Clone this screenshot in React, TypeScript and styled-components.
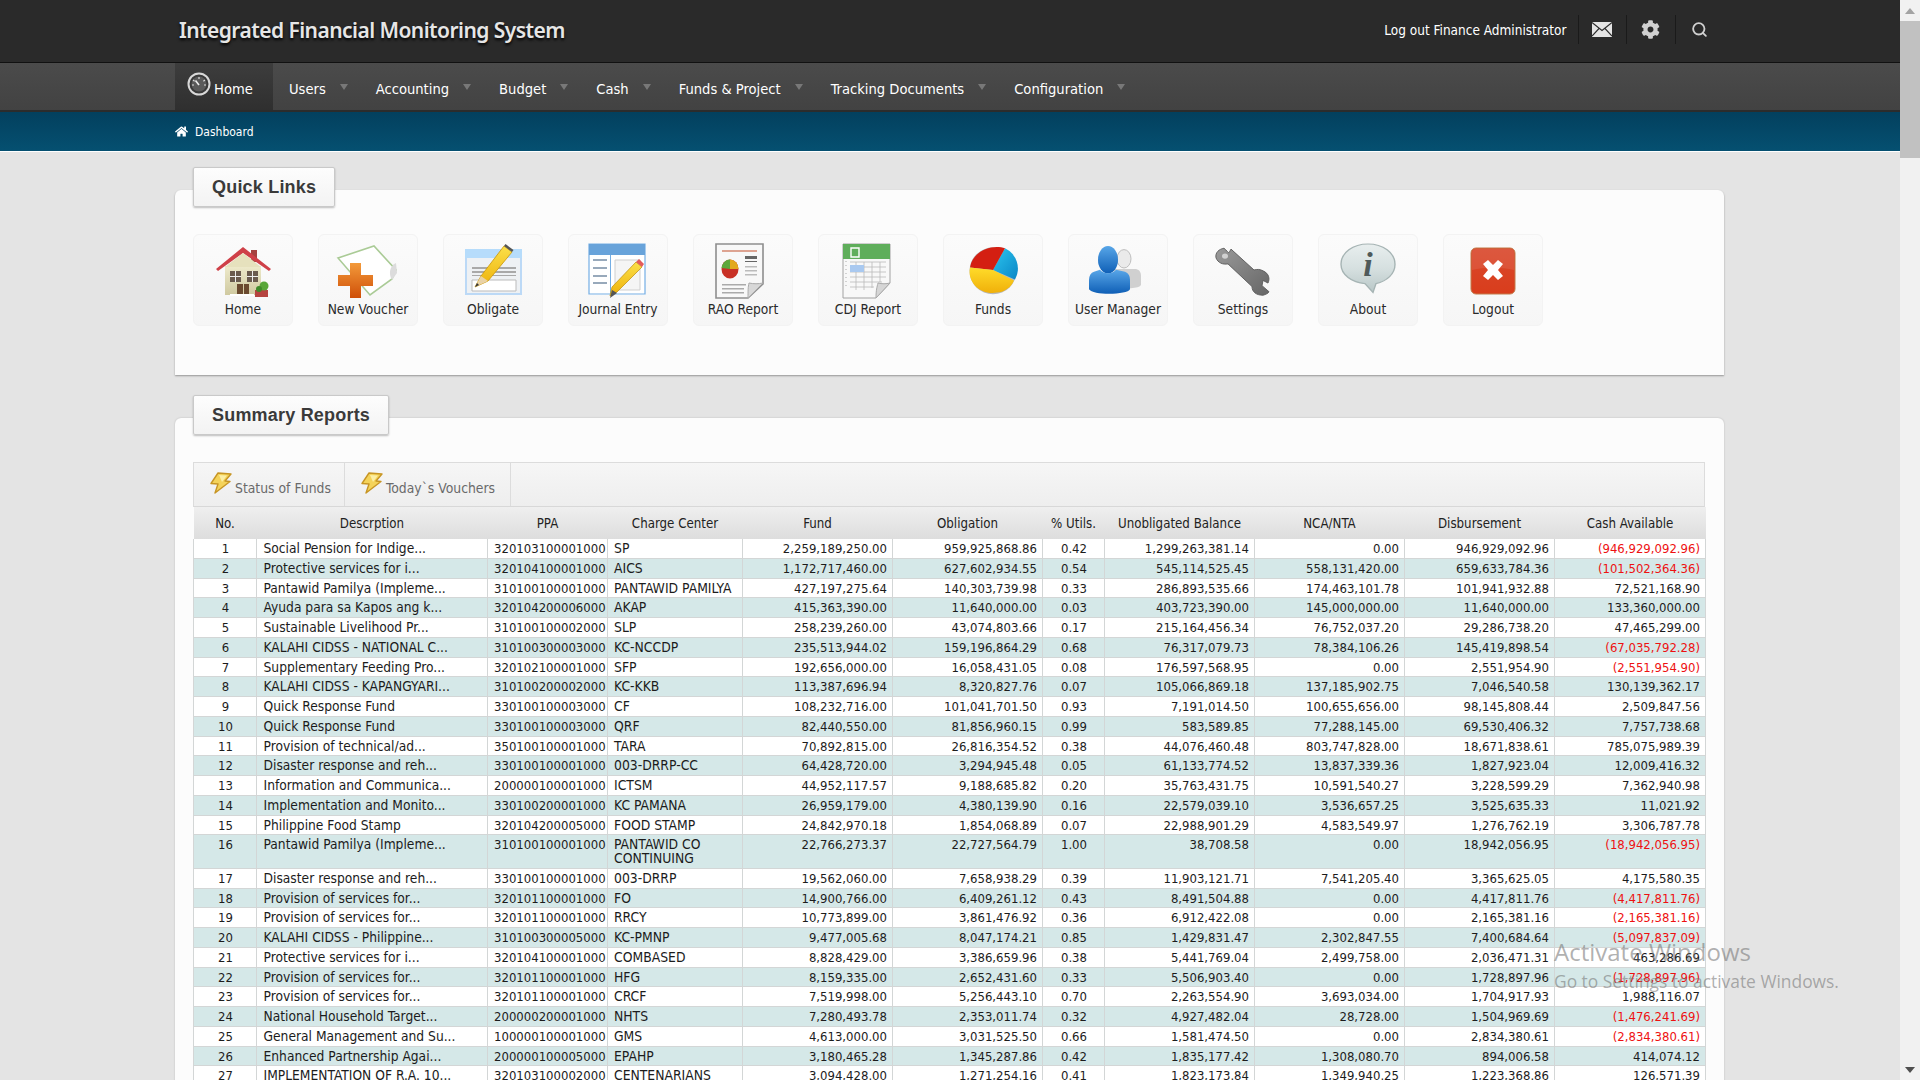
import React from "react";
import styled, { createGlobalStyle } from "styled-components";
import { FaCog, FaHome } from "react-icons/fa";
import { Search } from "lucide-react";

const UI = `"DejaVu Sans Condensed", "DejaVu Sans", sans-serif`;

const GlobalStyle = createGlobalStyle`
  html, body { margin: 0; padding: 0; height: 100%; overflow: hidden; background: #e4e4e4; }
  body { font-family: ${UI}; font-size: 13px; color: #222; }
  * { box-sizing: border-box; }
`;

const Viewport = styled.div`
  display: flex;
  height: 100vh;
  overflow: hidden;
  position: relative;
`;
const Main = styled.div`
  flex: 1;
  min-width: 0;
  overflow: hidden;
`;
const ScrollTrack = styled.div`
  width: 20px;
  flex: none;
  height: 100%;
  background: #f1f1f1;
  display: flex;
  flex-direction: column;
  align-items: center;
  justify-content: space-between;
`;
const ScrollArrow = styled.div<{ $down?: boolean }>`
  height: 21px;
  width: 100%;
  display: flex;
  align-items: center;
  justify-content: center;
  &::before {
    content: "";
    border-left: 5px solid transparent;
    border-right: 5px solid transparent;
    ${(p) => (p.$down ? "border-top: 6px solid #505050;" : "border-bottom: 6px solid #a3a3a3;")}
  }
`;
const ScrollThumb = styled.div`
  width: 100%;
  height: 137px;
  background: #c1c1c1;
`;
const ScrollSpace = styled.div`
  flex: 1;
`;

const TopBar = styled.header`
  height: 63px;
  background: #2a2a2a;
  border-bottom: 1px solid #111;
  display: flex;
  align-items: center;
  padding: 0 177px 3px 179px;
`;
const Brand = styled.div`
  font-family: "Noto Sans", sans-serif;
  font-weight: 600;
  font-size: 21px;
  letter-spacing: -0.55px;
  color: #e6e6e6;
  text-shadow: 0 2px 3px #000;
  flex: 1;
`;
const LogoutLink = styled.a`
  color: #fff;
  font-size: 13.5px;
  margin-right: 11px;
`;
const ActionIcon = styled.div`
  width: 48.5px;
  height: 29px;
  border-left: 1px solid #1a1a1a;
  display: flex;
  align-items: center;
  justify-content: center;
  color: #d0d0d0;
`;

const NavBar = styled.nav`
  height: 49px;
  background: linear-gradient(#4b4b4b, #424242);
  border-bottom: 2px solid #2c2c2c;
  display: flex;
  padding-left: 175px;
`;
const NavHome = styled.a`
  width: 98px;
  margin-right: 16px;
  display: flex;
  align-items: center;
  padding: 3px 0 0 12px;
  gap: 3px;
  color: #fff;
  font-size: 14.6px;
  background: linear-gradient(#3d3d3d, #2f2f2f);
  svg { margin-top: -8px; }
`;
const NavItem = styled.a`
  display: flex;
  align-items: center;
  padding-top: 3px;
  color: #fff;
  font-size: 14.6px;
  margin-right: 28px;
`;
const Caret = styled.span`
  margin-left: 14px;
  margin-top: -3px;
  border-left: 4.5px solid transparent;
  border-right: 4.5px solid transparent;
  border-top: 6px solid #787878;
`;

const Crumbs = styled.div`
  height: 40px;
  background: linear-gradient(#03405e, #055071);
  border-bottom: 1px solid #fff;
  display: flex;
  align-items: center;
  padding-left: 175px;
  gap: 7px;
  color: #fff;
  font-size: 12px;
`;

const Content = styled.main`
  padding: 38px 0 0 175px;
  width: 1724px;
`;
const Card = styled.section<{ $grow?: boolean }>`
  background: #fcfcfc;
  border-radius: 6px 6px 0 0;
  box-shadow: 0 1px 2px rgba(0, 0, 0, 0.35);
  padding: 0 18px 49px;
  margin-bottom: 43px;
  ${(p) => p.$grow && "padding-bottom: 0; margin-bottom: 0; box-shadow: 0 0 2px rgba(0,0,0,.2);"}
`;
const CardTitle = styled.h2`
  display: flex;
  width: fit-content;
  align-items: center;
  height: 40px;
  margin: 0;
  position: relative;
  top: -23px;
  margin-bottom: -23px;
  padding: 0 18px;
  background: linear-gradient(#fdfdfd, #f3f3f3);
  border: 1px solid #c9c9c9;
  border-radius: 2px;
  box-shadow: 0 1px 2px rgba(0, 0, 0, 0.25);
  font-family: "Liberation Sans", Arial, sans-serif;
  font-weight: 700;
  font-size: 18px;
  letter-spacing: 0.2px;
  color: #3a3a3a;
`;
const LinkGrid = styled.div`
  display: flex;
  gap: 25px;
  margin-top: 27px;
`;
const LinkTile = styled.a`
  width: 100px;
  height: 92px;
  background: linear-gradient(#fbfbfb, #f6f6f6);
  border: 1px solid #f3f3f3;
  border-radius: 6px;
  display: flex;
  flex-direction: column;
  align-items: center;
  padding-top: 8px;
  color: #2a2a2a;
  font-size: 13.7px;
  svg { flex: none; }
  span { margin-top: 2px; white-space: nowrap; }
`;

const TableBox = styled.div`
  margin-top: 27px;
  width: 1512px;
`;
const Tabs = styled.div`
  display: flex;
  height: 45px;
  background: linear-gradient(#f6f6f6, #eeeeee);
  border: 1px solid #dcdcdc;
  border-bottom: 1px solid #d8d8d8;
`;
const Tab = styled.a<{ $w: number }>`
  width: ${(p) => p.$w}px;
  border-right: 1px solid #dcdcdc;
  display: flex;
  align-items: flex-start;
  padding: 8px 0 0 15px;
  gap: 2px;
  color: #6a6a6a;
  font-size: 13.8px;
  span { margin-top: 9px; }
`;
const Table = styled.table`
  border-collapse: collapse;
  table-layout: fixed;
  width: 1512px;
  font-size: 13px;
  line-height: 13.75px;
  color: #1c1c1c;
`;
const HeadRow = styled.tr`
  height: 32px;
  background: linear-gradient(#efefef, #dddddd);
`;
const Th = styled.th`
  font-weight: 400;
  text-align: center;
  padding: 1px 0 0;
  font-size: 13.2px;
  color: #222;
`;
const Row = styled.tr<{ $even: boolean }>`
  background: ${(p) => (p.$even ? "#d5e8e8" : "#ffffff")};
`;
const Td = styled.td<{ $align?: string; $red?: boolean }>`
  border: 1px solid #d3d6d6;
  border-top: 0;
  padding: 3px 5px 2px 6px;
  vertical-align: top;
  text-align: ${(p) => p.$align || "left"};
  color: ${(p) => (p.$red ? "#ee1111" : "inherit")};
  white-space: normal;
  overflow: hidden;
`;
const DescCell = styled(Td)`
  font-size: 13.7px;
  padding-left: 6.5px;
`;
const CenterCell = styled(Td)`
  font-size: 13.8px;
`;

const Watermark = styled.div`
  position: absolute;
  left: 1554px;
  top: 936px;
  font-family: "Open Sans", sans-serif;
  color: rgba(110, 110, 110, 0.55);
  pointer-events: none;
`;
const WatermarkTitle = styled.div`
  font-size: 24px;
  line-height: 32px;
`;
const WatermarkNote = styled.div`
  font-size: 17.4px;
  line-height: 24px;
  margin-top: 1px;
  white-space: nowrap;
`;

const Gauge = () => (
  <svg width="24" height="24" viewBox="0 0 24 24">
    <circle cx="12" cy="12" r="10.5" fill="#3a3a3a" stroke="#d8d8d8" strokeWidth="2" />
    <circle cx="12" cy="12" r="7.5" fill="#5a5a5a" />
    <path d="M12 5v2M6 8l1.6 1.2M18 8l-1.6 1.2M5 13h2M19 13h-2" stroke="#ddd" strokeWidth="1.2" />
    <path d="M12 13L8.5 8.5" stroke="#eee" strokeWidth="1.6" />
  </svg>
);
const Mail = () => (
  <svg width="20" height="15" viewBox="0 0 20 15">
    <path d="M0 0h20v15H0z" fill="#e4e4e4" />
    <path d="M0 .5l10 8 10-8M0 14l7-7.5M20 14l-7-7.5" fill="none" stroke="#2a2a2a" strokeWidth="1.1" />
  </svg>
);
const Bolt = () => (
  <svg width="24" height="24" viewBox="0 0 24 24" style={{ flex: "none" }}>
    <path d="M9 2l13 1-6 7 5 .5L6 22l3-9-7-.5z" fill="#f4d35a" stroke="#c79524" strokeWidth="1.4" strokeLinejoin="round" />
    <path d="M10 4l8 .6-5 6.4" fill="#fbeea5" />
  </svg>
);

const IconBox: React.FC<{ children: React.ReactNode }> = ({ children }) => (
  <svg width="64" height="56" viewBox="0 0 64 56">{children}</svg>
);

const icons: Record<string, React.ReactNode> = {
  Home: (
    <IconBox>
      <defs>
        <linearGradient id="hw" x1="0" y1="0" x2="0" y2="1"><stop offset="0" stopColor="#eeeacb" /><stop offset="1" stopColor="#cfc9a0" /></linearGradient>
      </defs>
      <path d="M40 7h6v12h-6z" fill="#a5413f" />
      <path d="M14 23h36v29H14z" fill="url(#hw)" />
      <path d="M5 26L32 4l28 22-2 2L32 10 7 28z" fill="#cf4048" />
      <path d="M32 10L14 24h36z" fill="#e6e1bd" />
      <path d="M19 28h11v11H19zM36 28h11v11H36z" fill="#6a5b4e" />
      <path d="M24 28h1v11h-1zM19 33h11v1H19zM41 28h1v11h-1zM36 33h11v1H36z" fill="#eee" />
      <path d="M26 41h12v10H26z" fill="#6b4a2f" />
      <path d="M32 41h1v10h-1z" fill="#d7cfa7" />
      <path d="M19 51h24v2H19z" fill="#fff" />
      <path d="M44 47h13v7H44z" fill="#b5433f" />
      <circle cx="53" cy="43" r="4.5" fill="#58a638" />
      <circle cx="48" cy="46" r="3" fill="#3f8a2a" />
    </IconBox>
  ),
  "New Voucher": (
    <IconBox>
      <defs>
        <linearGradient id="nv" x1="0" y1="0" x2="0" y2="1"><stop offset="0" stopColor="#f39a3a" /><stop offset="1" stopColor="#cf4f08" /></linearGradient>
      </defs>
      <path d="M2 15L38 3l22 24-4 9-22 16z" fill="#fff" stroke="#aacb96" strokeWidth="1.6" />
      <path d="M60 20c-6 3-8 10-4 17l5-7z" fill="#dcdcdc" />
      <path d="M14 20h11v12h12v11H25v12H14V43H2V32h12z" fill="url(#nv)" />
    </IconBox>
  ),
  Obligate: (
    <IconBox>
      <defs>
        <linearGradient id="ob" x1="0" y1="0" x2="0" y2="1"><stop offset="0" stopColor="#fbe04a" /><stop offset="1" stopColor="#eeb10a" /></linearGradient>
      </defs>
      <path d="M4 6h57v46H4z" fill="#bcd9f6" />
      <path d="M6 15h53v35H6z" fill="#eef1f4" />
      <path d="M4 6h57v9H4z" fill="#b6dcfb" />
      <path d="M11 24h44v2H11zM11 28h44v2H11zM11 32h44v1H11z" fill="#a9a9a9" />
      <path d="M11 37h44v11H11z" fill="#fff" stroke="#bbb" />
      <path d="M14 44l6-11L43 3l8 6L27 38z" fill="url(#ob)" stroke="#c99508" strokeWidth=".8" />
      <path d="M14 44l6-11 7 5z" fill="#e9d2a6" />
      <path d="M14 44l2-4 2 2z" fill="#333" />
      <path d="M43 3l8 6 1.5-2-8-6z" fill="#555" />
    </IconBox>
  ),
  "Journal Entry": (
    <IconBox>
      <defs>
        <linearGradient id="je" x1="0" y1="0" x2="0" y2="1"><stop offset="0" stopColor="#fbe04a" /><stop offset="1" stopColor="#eeb10a" /></linearGradient>
      </defs>
      <g transform="translate(-3 1)">
        <path d="M6 0h56v51H6z" fill="#fff" />
        <path d="M6 0h56v50H6z" fill="#fff" stroke="#74aee4" strokeWidth="1.2" />
        <path d="M6 0h56v11H6z" fill="#68a3da" />
        <path d="M10 15h14v2H10zM10 23h14v2H10zM10 31h14v2H10zM10 38h14v2H10z" fill="#98a9bb" />
        <path d="M27 11h1v39h-1z" fill="#74aee4" />
        <path d="M32 16h25v30H32z" fill="#f5f5f5" stroke="#cfcfcf" />
        <path d="M27 52l2-9L53 18l6 5-25 25z" fill="url(#je)" stroke="#bb8c08" strokeWidth=".7" />
        <path d="M53 18l6 5 2-3-5-5z" fill="#e35c5c" />
        <path d="M27 54l2-8 5 3z" fill="#555" />
      </g>
    </IconBox>
  ),
  "RAO Report": (
    <IconBox>
      <g transform="translate(-6 0)">
        <path d="M11 1h47v40L43 55H11z" fill="#f8f8f8" stroke="#8e8e8e" strokeWidth="1.6" />
        <path d="M43 55c0-7 0-11 1-15 5 1 9 1 14 0z" fill="#d8d8d8" stroke="#aaa" />
        <path d="M17 7h35v2H17z" fill="#dda391" />
        <path d="M40 13h12v3H40zM40 18h12v1H40z" fill="#666" />
        <path d="M40 23h12v1.4H40zM40 27h12v1.4H40zM40 31h12v1.4H40z" fill="#bbb" />
        <path d="M17 41h24v1.4H17zM17 45h22v1.4H17zM17 49h22v1.4H17z" fill="#aaa" />
        <ellipse cx="25" cy="26" rx="8.5" ry="9.5" fill="#c83025" />
        <path d="M25 26V16.500a8.500 9.500 0 0 1 8.500 9.500z" fill="#e2a91c" />
        <path d="M25 26l-8.500-1a8.500 9.500 0 0 1 8.500-8.500z" fill="#5da83b" />
      </g>
    </IconBox>
  ),
  "CDJ Report": (
    <IconBox>
      <g transform="translate(-2 0)">
        <path d="M9 1h47v39L42 55H9z" fill="#f8f8f8" stroke="#a2a2a2" />
        <path d="M9 1h47v15H9z" fill="#5fae5b" />
        <path d="M17 5h8v9h-8z" fill="none" stroke="#fff" strokeWidth="1.4" />
        <path d="M16 19h36M16 24h36M16 29h36M16 34h36M16 39h32M16 44h24M22 19v28M30 19v28M38 19v26M46 19v20" stroke="#b9b9b9" strokeWidth=".8" fill="none" />
        <path d="M16 22h14v7H16z" fill="#a9c9f0" />
        <path d="M12 18v28" stroke="#aaa" strokeDasharray="1 3" />
        <path d="M42 55c0-8 1-11 2-15 4 1 8 1 12 0z" fill="#d6d6d6" stroke="#aaa" />
      </g>
    </IconBox>
  ),
  Funds: (
    <IconBox>
      <defs>
        <linearGradient id="f1" x1="0" y1="0" x2="0" y2="1"><stop offset="0" stopColor="#ffdc2a" /><stop offset="1" stopColor="#f0b00a" /></linearGradient>
        <linearGradient id="f2" x1="0" y1="0" x2="1" y2="1"><stop offset="0" stopColor="#2cc6ef" /><stop offset="1" stopColor="#0a86c6" /></linearGradient>
      </defs>
      <g transform="translate(0 3.500) scale(1 .87)">
        <ellipse cx="32" cy="28" rx="23.500" ry="27" fill="#b8b8b8" />
        <path d="M32 27L44 2a23 26 0 0 1 10 36z" fill="url(#f2)" />
        <path d="M32 27L44 2C32-3 12 4 9 24z" fill="#d41f12" />
        <path d="M32 27L9 24c-3 18 11 32 27 29 8-1 14-6 17-14z" fill="url(#f1)" />
      </g>
    </IconBox>
  ),
  "User Manager": (
    <IconBox>
      <defs>
        <linearGradient id="u1" x1="0" y1="0" x2="0" y2="1"><stop offset="0" stopColor="#58a6e8" /><stop offset="1" stopColor="#0f5fb6" /></linearGradient>
      </defs>
      <g transform="translate(-8 2) scale(1 .92)">
        <ellipse cx="46" cy="15" rx="7" ry="10" fill="#eaeaea" stroke="#bbb" />
        <path d="M36 26h22c4 1 5 4 5 8v9c0 3-8 5-27 5z" fill="#d0d0d0" />
        <ellipse cx="30" cy="16" rx="10" ry="15" fill="url(#u1)" />
        <path d="M22 27c3 5 13 5 16 0l9 2c4 2 5 5 5 9v10c-2 6-37 7-41 0V38c0-5 2-8 5-9z" fill="url(#u1)" />
      </g>
    </IconBox>
  ),
  Settings: (
    <IconBox>
      <defs>
        <linearGradient id="w1" x1="0" y1="0" x2="1" y2="1"><stop offset="0" stopColor="#9a9a9a" /><stop offset="1" stopColor="#666" /></linearGradient>
      </defs>
      <g transform="translate(0 3.500) scale(1 .87)">
        <path d="M13 2c-5 1-9 5-8 11 2 6 7 8 12 7l24 26c0 6 4 10 11 10 3-1 5-2 6-4l-7-7 1-6 5 3c2-5 1-11-5-14-3-2-6-2-9-1L20 3c-3 6-1 5-7-1z" fill="url(#w1)" stroke="#5c5c5c" />
        <circle cx="14" cy="11" r="3" fill="#fbfbfb" opacity=".6" />
      </g>
    </IconBox>
  ),
  About: (
    <IconBox>
      <defs>
        <linearGradient id="a1" x1="0" y1="0" x2="0" y2="1"><stop offset="0" stopColor="#e8eeee" /><stop offset=".5" stopColor="#d6e0e0" /><stop offset="1" stopColor="#b9c7c7" /></linearGradient>
      </defs>
      <g transform="translate(0 1) scale(1 .88)">
        <path d="M32 0c15 0 27 10 27 23 0 11-8 19-19 22l-3 10-8-10C16 44 5 35 5 23 5 10 17 0 32 0z" fill="url(#a1)" stroke="#a6b4b4" strokeWidth="1.4" />
      </g>
      <text x="32" y="33" textAnchor="middle" fontFamily="'Liberation Serif', serif" fontStyle="italic" fontWeight="700" fontSize="34" fill="#4f5a5a">i</text>
    </IconBox>
  ),
  Logout: (
    <IconBox>
      <defs>
        <linearGradient id="l1" x1="0" y1="0" x2="0" y2="1"><stop offset="0" stopColor="#d9482c" /><stop offset="1" stopColor="#d93d1c" /></linearGradient>
      </defs>
      <rect x="10" y="5" width="44" height="46" rx="5" fill="url(#l1)" stroke="#c27a4a" />
      <path d="M11 27c12-3 30-3 42 0V10a4 4 0 0 0-4-4H15a4 4 0 0 0-4 4z" fill="#fff" opacity=".09" />
      <path d="M22 21l5-4 5 5 5-5 5 4-5 6 5 6-5 4-5-5-5 5-5-4 5-6z" fill="#fff" />
    </IconBox>
  ),
};

const quickLinks = ["Home", "New Voucher", "Obligate", "Journal Entry", "RAO Report", "CDJ Report", "Funds", "User Manager", "Settings", "About", "Logout"];
const navItems = ["Users", "Accounting", "Budget", "Cash", "Funds & Project", "Tracking Documents", "Configuration"];

const columns: [string, number][] = [
  ["No.", 63], ["Descrption", 231], ["PPA", 120], ["Charge Center", 135], ["Fund", 150], ["Obligation", 150],
  ["% Utils.", 62], ["Unobligated Balance", 150], ["NCA/NTA", 150], ["Disbursement", 150], ["Cash Available", 151],
];

const rows: string[][] = [
  ["Social Pension for Indige...", "320103100001000", "SP", "2,259,189,250.00", "959,925,868.86", "0.42", "1,299,263,381.14", "0.00", "946,929,092.96", "(946,929,092.96)"],
  ["Protective services for i...", "320104100001000", "AICS", "1,172,717,460.00", "627,602,934.55", "0.54", "545,114,525.45", "558,131,420.00", "659,633,784.36", "(101,502,364.36)"],
  ["Pantawid Pamilya (Impleme...", "310100100001000", "PANTAWID PAMILYA", "427,197,275.64", "140,303,739.98", "0.33", "286,893,535.66", "174,463,101.78", "101,941,932.88", "72,521,168.90"],
  ["Ayuda para sa Kapos ang k...", "320104200006000", "AKAP", "415,363,390.00", "11,640,000.00", "0.03", "403,723,390.00", "145,000,000.00", "11,640,000.00", "133,360,000.00"],
  ["Sustainable Livelihood Pr...", "310100100002000", "SLP", "258,239,260.00", "43,074,803.66", "0.17", "215,164,456.34", "76,752,037.20", "29,286,738.20", "47,465,299.00"],
  ["KALAHI CIDSS - NATIONAL C...", "310100300003000", "KC-NCCDP", "235,513,944.02", "159,196,864.29", "0.68", "76,317,079.73", "78,384,106.26", "145,419,898.54", "(67,035,792.28)"],
  ["Supplementary Feeding Pro...", "320102100001000", "SFP", "192,656,000.00", "16,058,431.05", "0.08", "176,597,568.95", "0.00", "2,551,954.90", "(2,551,954.90)"],
  ["KALAHI CIDSS - KAPANGYARI...", "310100200002000", "KC-KKB", "113,387,696.94", "8,320,827.76", "0.07", "105,066,869.18", "137,185,902.75", "7,046,540.58", "130,139,362.17"],
  ["Quick Response Fund", "330100100003000", "CF", "108,232,716.00", "101,041,701.50", "0.93", "7,191,014.50", "100,655,656.00", "98,145,808.44", "2,509,847.56"],
  ["Quick Response Fund", "330100100003000", "QRF", "82,440,550.00", "81,856,960.15", "0.99", "583,589.85", "77,288,145.00", "69,530,406.32", "7,757,738.68"],
  ["Provision of technical/ad...", "350100100001000", "TARA", "70,892,815.00", "26,816,354.52", "0.38", "44,076,460.48", "803,747,828.00", "18,671,838.61", "785,075,989.39"],
  ["Disaster response and reh...", "330100100001000", "003-DRRP-CC", "64,428,720.00", "3,294,945.48", "0.05", "61,133,774.52", "13,837,339.36", "1,827,923.04", "12,009,416.32"],
  ["Information and Communica...", "200000100001000", "ICTSM", "44,952,117.57", "9,188,685.82", "0.20", "35,763,431.75", "10,591,540.27", "3,228,599.29", "7,362,940.98"],
  ["Implementation and Monito...", "330100200001000", "KC PAMANA", "26,959,179.00", "4,380,139.90", "0.16", "22,579,039.10", "3,536,657.25", "3,525,635.33", "11,021.92"],
  ["Philippine Food Stamp", "320104200005000", "FOOD STAMP", "24,842,970.18", "1,854,068.89", "0.07", "22,988,901.29", "4,583,549.97", "1,276,762.19", "3,306,787.78"],
  ["Pantawid Pamilya (Impleme...", "310100100001000", "PANTAWID CO CONTINUING", "22,766,273.37", "22,727,564.79", "1.00", "38,708.58", "0.00", "18,942,056.95", "(18,942,056.95)"],
  ["Disaster response and reh...", "330100100001000", "003-DRRP", "19,562,060.00", "7,658,938.29", "0.39", "11,903,121.71", "7,541,205.40", "3,365,625.05", "4,175,580.35"],
  ["Provision of services for...", "320101100001000", "FO", "14,900,766.00", "6,409,261.12", "0.43", "8,491,504.88", "0.00", "4,417,811.76", "(4,417,811.76)"],
  ["Provision of services for...", "320101100001000", "RRCY", "10,773,899.00", "3,861,476.92", "0.36", "6,912,422.08", "0.00", "2,165,381.16", "(2,165,381.16)"],
  ["KALAHI CIDSS - Philippine...", "310100300005000", "KC-PMNP", "9,477,005.68", "8,047,174.21", "0.85", "1,429,831.47", "2,302,847.55", "7,400,684.64", "(5,097,837.09)"],
  ["Protective services for i...", "320104100001000", "COMBASED", "8,828,429.00", "3,386,659.96", "0.38", "5,441,769.04", "2,499,758.00", "2,036,471.31", "463,286.69"],
  ["Provision of services for...", "320101100001000", "HFG", "8,159,335.00", "2,652,431.60", "0.33", "5,506,903.40", "0.00", "1,728,897.96", "(1,728,897.96)"],
  ["Provision of services for...", "320101100001000", "CRCF", "7,519,998.00", "5,256,443.10", "0.70", "2,263,554.90", "3,693,034.00", "1,704,917.93", "1,988,116.07"],
  ["National Household Target...", "200000200001000", "NHTS", "7,280,493.78", "2,353,011.74", "0.32", "4,927,482.04", "28,728.00", "1,504,969.69", "(1,476,241.69)"],
  ["General Management and Su...", "100000100001000", "GMS", "4,613,000.00", "3,031,525.50", "0.66", "1,581,474.50", "0.00", "2,834,380.61", "(2,834,380.61)"],
  ["Enhanced Partnership Agai...", "200000100005000", "EPAHP", "3,180,465.28", "1,345,287.86", "0.42", "1,835,177.42", "1,308,080.70", "894,006.58", "414,074.12"],
  ["IMPLEMENTATION OF R.A. 10...", "320103100002000", "CENTENARIANS", "3,094,428.00", "1,271,254.16", "0.41", "1,823,173.84", "1,349,940.25", "1,223,368.86", "126,571.39"],
];

export default function App() {
  return (
    <Viewport>
      <GlobalStyle />
      <Main>
        <TopBar>
          <Brand>Integrated Financial Monitoring System</Brand>
          <LogoutLink>Log out Finance Administrator</LogoutLink>
          <ActionIcon><Mail /></ActionIcon>
          <ActionIcon><FaCog size={19} /></ActionIcon>
          <ActionIcon><Search size={17} strokeWidth={2.6} /></ActionIcon>
        </TopBar>
        <NavBar>
          <NavHome><Gauge />Home</NavHome>
          {navItems.map((n) => (
            <NavItem key={n}>{n}<Caret /></NavItem>
          ))}
        </NavBar>
        <Crumbs><FaHome size={13} />Dashboard</Crumbs>
        <Content>
          <Card>
            <CardTitle>Quick Links</CardTitle>
            <LinkGrid>
              {quickLinks.map((q) => (
                <LinkTile key={q}>{icons[q]}<span>{q}</span></LinkTile>
              ))}
            </LinkGrid>
          </Card>
          <Card $grow>
            <CardTitle>Summary Reports</CardTitle>
            <TableBox>
              <Tabs>
                <Tab $w={151}><Bolt /><span>Status of Funds</span></Tab>
                <Tab $w={166}><Bolt /><span>Today`s Vouchers</span></Tab>
              </Tabs>
              <Table>
                <colgroup>
                  {columns.map(([c, w]) => <col key={c} width={w} />)}
                </colgroup>
                <thead>
                  <HeadRow>
                    {columns.map(([c]) => <Th key={c}>{c}</Th>)}
                  </HeadRow>
                </thead>
                <tbody>
                  {rows.map((r, i) => (
                    <Row key={i} $even={i % 2 === 1}>
                      <Td $align="center">{i + 1}</Td>
                      <DescCell>{r[0]}</DescCell>
                      <Td>{r[1]}</Td>
                      <CenterCell>{r[2]}</CenterCell>
                      <Td $align="right">{r[3]}</Td>
                      <Td $align="right">{r[4]}</Td>
                      <Td $align="center">{r[5]}</Td>
                      <Td $align="right">{r[6]}</Td>
                      <Td $align="right">{r[7]}</Td>
                      <Td $align="right">{r[8]}</Td>
                      <Td $align="right" $red={r[9].startsWith("(")}>{r[9]}</Td>
                    </Row>
                  ))}
                </tbody>
              </Table>
            </TableBox>
          </Card>
        </Content>
      </Main>
      <ScrollTrack>
        <ScrollArrow />
        <ScrollThumb />
        <ScrollSpace />
        <ScrollArrow $down />
      </ScrollTrack>
      <Watermark>
        <WatermarkTitle>Activate Windows</WatermarkTitle>
        <WatermarkNote>Go to Settings to activate Windows.</WatermarkNote>
      </Watermark>
    </Viewport>
  );
}
